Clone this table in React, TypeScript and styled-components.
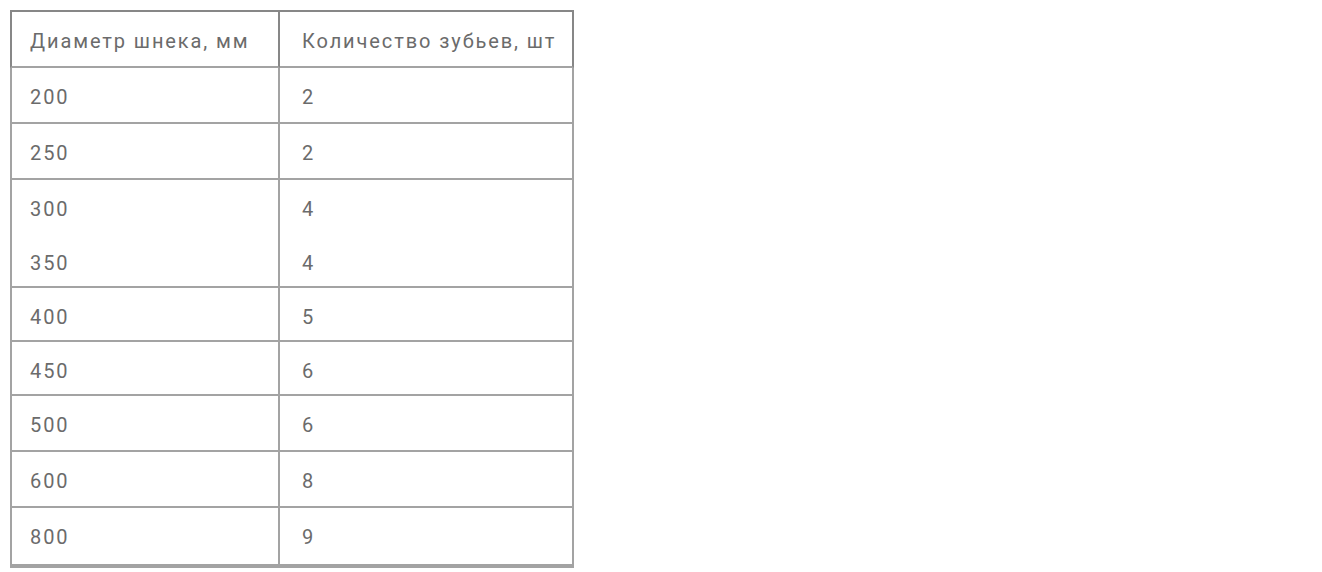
import React from 'react';
import styled, { createGlobalStyle } from 'styled-components';

const GlobalStyle = createGlobalStyle`
  body {
    margin: 0;
    background: #ffffff;
    font-family: Roboto, 'Liberation Sans', Arial, sans-serif;
  }
`;

const headBorder = '#878787';
const bodyBorder = '#a3a3a3';

type Row = { diameter: string; teeth: string; height: number; joined?: boolean };

const rows: Row[] = [
  { diameter: '200', teeth: '2', height: 56 },
  { diameter: '250', teeth: '2', height: 56 },
  { diameter: '300', teeth: '4', height: 54, joined: true },
  { diameter: '350', teeth: '4', height: 54 },
  { diameter: '400', teeth: '5', height: 54 },
  { diameter: '450', teeth: '6', height: 54 },
  { diameter: '500', teeth: '6', height: 56 },
  { diameter: '600', teeth: '8', height: 56 },
  { diameter: '800', teeth: '9', height: 60 },
];

const Page = styled.div`
  padding: 10px 0 0 10px;
`;

const Table = styled.table`
  border-collapse: separate;
  border-spacing: 0;
  width: 564px;
  table-layout: fixed;
  color: #6b6b6b;
  font-size: 20px;
  line-height: 20px;
  letter-spacing: 1.9px;
`;

const HeadCell = styled.th<{ $first?: boolean }>`
  box-sizing: border-box;
  width: ${({ $first }) => ($first ? '270px' : '294px')};
  height: 56px;
  padding: 19px 0 15px ${({ $first }) => ($first ? '18px' : '22px')};
  text-align: left;
  font-weight: 400;
  white-space: nowrap;
  border-top: 2px solid ${headBorder};
  border-right: 2px solid ${headBorder};
  border-left: ${({ $first }) => ($first ? `2px solid ${headBorder}` : 'none')};
  border-bottom: 2px solid ${bodyBorder};
`;

const Cell = styled.td<{ $first?: boolean; $joined?: boolean; $last?: boolean; $h: number }>`
  box-sizing: border-box;
  height: ${({ $h }) => $h}px;
  padding: 19px 0 0 ${({ $first }) => ($first ? '18px' : '22px')};
  text-align: left;
  vertical-align: top;
  border-right: 2px solid ${bodyBorder};
  border-left: ${({ $first }) => ($first ? `2px solid ${bodyBorder}` : 'none')};
  border-bottom: ${({ $joined, $last }) =>
    $joined ? 'none' : `${$last ? 4 : 2}px solid ${bodyBorder}`};
`;

export default function App() {
  return (
    <Page>
      <GlobalStyle />
      <Table>
        <thead>
          <tr>
            <HeadCell $first>Диаметр шнека, мм</HeadCell>
            <HeadCell>Количество зубьев, шт</HeadCell>
          </tr>
        </thead>
        <tbody>
          {rows.map((r, i) => {
            const last = i === rows.length - 1;
            return (
              <tr key={r.diameter}>
                <Cell $first $joined={r.joined} $last={last} $h={r.height}>
                  {r.diameter}
                </Cell>
                <Cell $joined={r.joined} $last={last} $h={r.height}>
                  {r.teeth}
                </Cell>
              </tr>
            );
          })}
        </tbody>
      </Table>
    </Page>
  );
}
